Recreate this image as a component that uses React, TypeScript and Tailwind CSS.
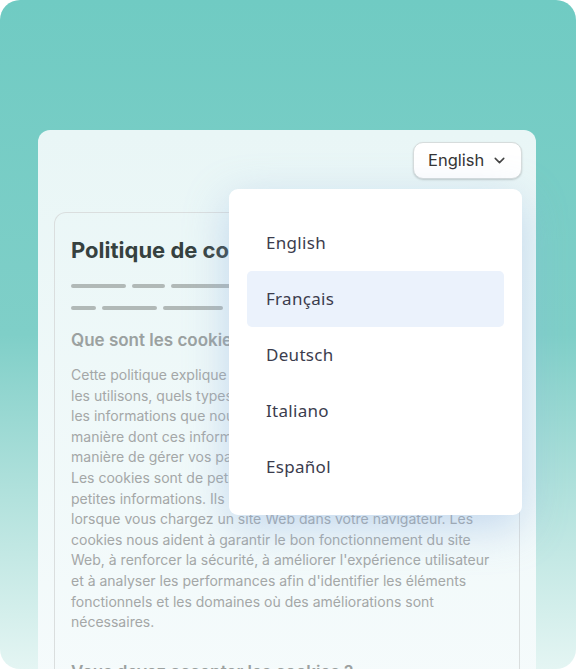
import { ChevronDown } from "lucide-react";

const languages = ["English", "Français", "Deutsch", "Italiano", "Español"];

const paragraph = [
  "Cette politique explique ce que sont les cookies, comment nous",
  "les utilisons, quels types de cookies nous utilisons, c'est-à-dire",
  "les informations que nous collectons à l'aide des cookies et la",
  "manière dont ces informations sont utilisées, ainsi que la",
  "manière de gérer vos paramètres de cookies.",
  "Les cookies sont de petits fichiers texte utilisés pour stocker de",
  "petites informations. Ils sont stockés sur votre appareil",
  "lorsque vous chargez un site Web dans votre navigateur. Les",
  "cookies nous aident à garantir le bon fonctionnement du site",
  "Web, à renforcer la sécurité, à améliorer l'expérience utilisateur",
  "et à analyser les performances afin d'identifier les éléments",
  "fonctionnels et les domaines où des améliorations sont",
  "nécessaires.",
];

export default function App() {
  return (
    <div className="h-[669px] w-[576px] overflow-hidden bg-white font-['Inter',sans-serif]">
      <div className="flex h-full flex-col rounded-[20px] bg-gradient-to-b from-[#70cbc3] via-[#7fcfc8] to-[#e4f5f3] pl-[38px] pr-[40px] pt-[130px]">
        <div className="relative flex-1 rounded-t-[12px] bg-gradient-to-b from-[#e9f6f6] to-[#f8fcfd] pl-4 pr-[14px] pt-3">
          <div className="flex justify-end">
            <button className="flex h-[37px] w-[109px] items-center gap-[7px] rounded-[10px] border border-[#d6dcdc] bg-white pl-[14px] text-[16.5px] text-[#343434] shadow-[0_1px_2px_rgba(0,0,0,0.18)]">
              English
              <ChevronDown className="h-[17px] w-[17px] text-[#444]" strokeWidth={2.2} />
            </button>
          </div>

          <div className="mr-[2px] mt-[33px] h-[600px] rounded-t-[12px] border border-b-0 border-[#dadede] px-4 pt-[22px]">
            <h1 className="whitespace-nowrap text-[22px] font-bold leading-[30px] text-[#36413f]">
              Politique de cookies
            </h1>
            <div className="mt-[19px] flex gap-[6px]">
              <div className="h-[4px] w-[55px] rounded-full bg-[#b1b9b7]" />
              <div className="h-[4px] w-[33px] rounded-full bg-[#b1b9b7]" />
              <div className="h-[4px] w-[80px] rounded-full bg-[#b1b9b7]" />
            </div>
            <div className="mt-[18px] flex gap-[6px]">
              <div className="h-[4px] w-[25px] rounded-full bg-[#b1b9b7]" />
              <div className="h-[4px] w-[55px] rounded-full bg-[#b1b9b7]" />
              <div className="h-[4px] w-[60px] rounded-full bg-[#b1b9b7]" />
              <div className="h-[4px] w-[40px] rounded-full bg-[#b1b9b7]" />
            </div>
            <h2 className="mt-[17px] whitespace-nowrap text-[17px] font-semibold leading-[26px] text-[#9ba1a0]">
              Que sont les cookies ?
            </h2>
            <p className="mt-[12px] text-[14px] leading-[20.6px] text-[#a4a7a7]">
              {paragraph.map((line) => (
                <span key={line} className="block whitespace-nowrap">
                  {line}
                </span>
              ))}
            </p>
            <h2 className="mt-[26px] whitespace-nowrap text-[17px] font-semibold leading-[26px] text-[#9ba1a0]">
              Vous devez accepter les cookies ?
            </h2>
          </div>

          <div className="absolute left-[191px] top-[59px] w-[293px] rounded-[9px] bg-white px-[18px] pb-[20px] pt-[26px] shadow-[0_12px_44px_rgba(140,175,225,0.45)]">
            {languages.map((lang) => (
              <div
                key={lang}
                className={
                  lang === "Français"
                    ? "flex h-[56px] items-center rounded-[5px] bg-[#ebf2fc] pl-[19px] font-['Noto_Sans',sans-serif] text-[17px] tracking-[0.3px] text-[#3b3c4d]"
                    : "flex h-[56px] items-center rounded-[5px] pl-[19px] font-['Noto_Sans',sans-serif] text-[17px] tracking-[0.3px] text-[#3b3c4d]"
                }
              >
                {lang}
              </div>
            ))}
          </div>
        </div>
      </div>
    </div>
  );
}
